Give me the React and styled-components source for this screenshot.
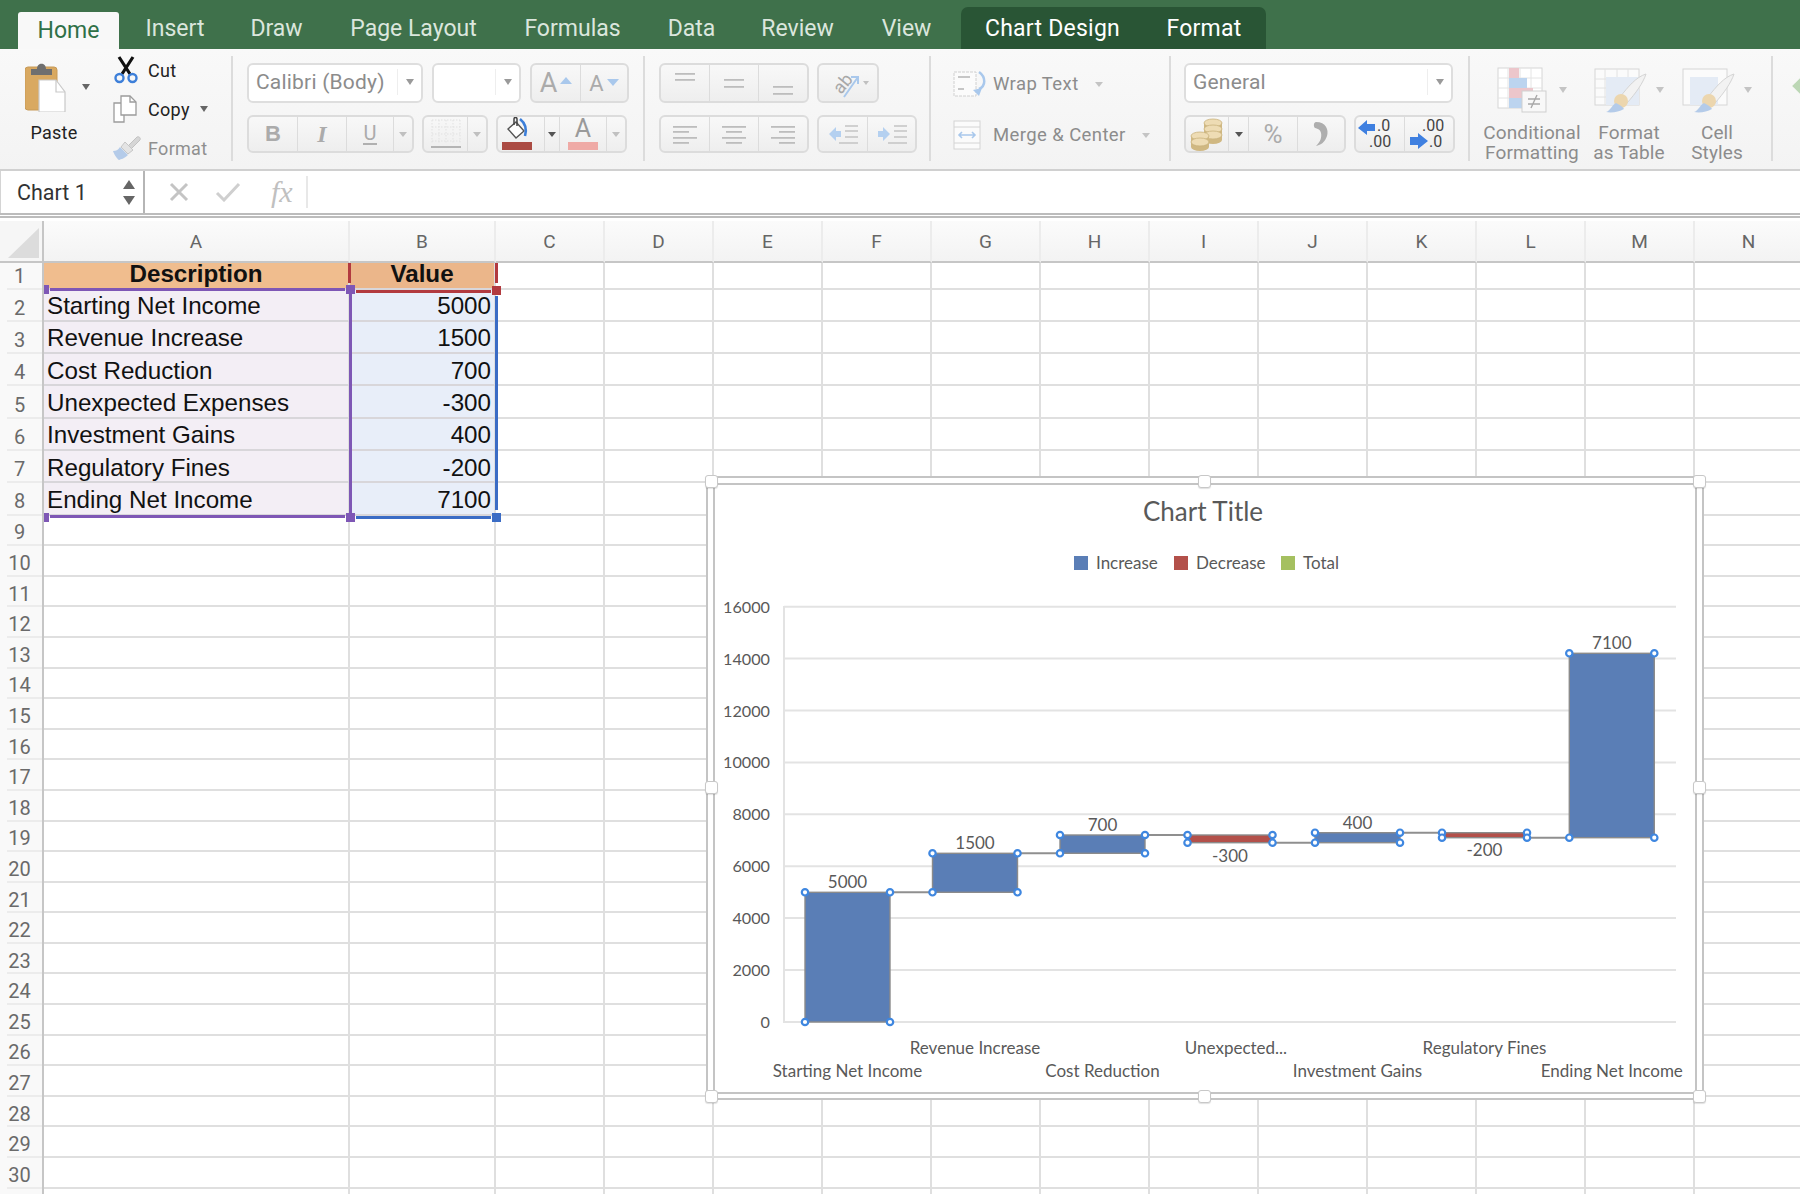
import React from "react";
import styled, { createGlobalStyle } from "styled-components";

const GlobalStyle = createGlobalStyle`
  html, body { margin: 0; padding: 0; background: #fff; }
  * { box-sizing: border-box; }
`;

const UI = `Roboto, "Liberation Sans", sans-serif`;
const CHART = `Lato, "Open Sans", sans-serif`;

const Page = styled.div`
  width: 1800px;
  height: 1194px;
  overflow: hidden;
  position: relative;
  font-family: ${UI};
  background: #fff;
`;

/* tabs */
const TabBar = styled.div`
  height: 49px;
  background: #3f714b;
  display: flex;
  align-items: flex-end;
  padding-left: 18px;
`;
const Tab = styled.div`
  width: ${(p) => p.$w}px;
  height: ${(p) => (p.$active ? 37 : 42)}px;
  display: flex;
  align-items: center;
  justify-content: center;
  padding-top: ${(p) => (p.$active ? 0 : 1)}px;
  font-size: 23px;
  letter-spacing: ${(p) => (p.$light ? 0.25 : 0)}px;
  color: ${(p) => (p.$active ? "#2f7047" : p.$light ? "#fff" : "#dbe6dd")};
  background: ${(p) => (p.$active ? "#f8f8f8" : "transparent")};
  border-radius: ${(p) => (p.$active ? "3px 3px 0 0" : "0")};
`;
const ContextTabs = styled.div`
  display: flex;
  padding-right: 2px;
  background: #295535;
  border-radius: 7px 7px 0 0;
`;

/* ribbon */
const Ribbon = styled.div`
  height: 122px;
  display: flex;
  padding-top: 7px;
  background: linear-gradient(#f9f9f9, #f3f3f3);
  border-bottom: 2px solid #d0d0d0;
  overflow: hidden;
`;
const Group = styled.div`
  width: ${(p) => p.$w}px;
  height: 105px;
  flex: none;
  display: flex;
  padding-left: ${(p) => p.$pad || 0}px;
  border-right: ${(p) => (p.$last ? "none" : "2px solid #dcdcdc")};
`;
const Stack = styled.div`
  display: flex;
  flex-direction: column;
  gap: 12px;
  padding-top: 7px;
`;
const ControlRow = styled.div`
  display: flex;
  height: ${(p) => p.$h}px;
  gap: ${(p) => p.$gap || 8}px;
`;
const Select = styled.div`
  width: ${(p) => p.$w}px;
  height: 100%;
  display: flex;
  align-items: center;
  background: #fff;
  border: 2px solid #dedede;
  border-radius: 6px;
  padding: 0 0 2px 7px;
  font-size: 21px;
  color: #8c8c8c;
`;
const SelectText = styled.div`
  flex: 1;
  letter-spacing: 0.2px;
`;
const SelectArrow = styled.div`
  width: 24px;
  height: 26px;
  display: flex;
  align-items: center;
  justify-content: center;
  border-left: 1px solid #eee;
`;
const Caret = styled.span`
  display: inline-block;
  flex: none;
  width: 0;
  height: 0;
  border-left: ${(p) => p.$s || 4.5}px solid transparent;
  border-right: ${(p) => p.$s || 4.5}px solid transparent;
  border-top: ${(p) => (p.$s || 4.5) * 1.4}px solid ${(p) => p.$c || "#9a9a9a"};
`;
const BtnGroup = styled.div`
  display: flex;
  height: 100%;
  border: 2px solid #dcdcdc;
  border-radius: 6px;
  background: linear-gradient(#f8f8f8, #eeeeee);
  overflow: hidden;
`;
const Seg = styled.div`
  width: ${(p) => p.$w}px;
  height: 100%;
  flex: none;
  display: flex;
  align-items: center;
  justify-content: center;
  border-right: ${(p) => (p.$end ? "none" : "1px solid #dcdcdc")};
  color: #ababab;
  font-size: ${(p) => p.$size || 22}px;
`;
const BoldMark = styled.span`
  font-family: "Liberation Sans", sans-serif;
  font-weight: 700;
`;
const ItalicMark = styled.span`
  font-family: "Liberation Serif", serif;
  font-style: italic;
  font-weight: 700;
  font-size: 24px;
`;
const UnderMark = styled.span`
  font-family: Roboto, sans-serif;
  font-size: 20px;
  border-bottom: 2px solid #b0b0b0;
  line-height: 20px;
  padding: 0 1px;
`;
const GrowMark = styled.span`
  font-size: ${(p) => p.$size}px;
  color: #ababab;
  margin-right: 3px;
`;
const Tri = styled.span`
  display: inline-block;
  width: 0;
  height: 0;
  border-left: 6px solid transparent;
  border-right: 6px solid transparent;
  ${(p) => (p.$up ? "border-bottom: 7px solid #a9c8ec; margin-top: -6px;" : "border-top: 7px solid #a9c8ec; margin-top: -2px;")}
`;
const SwatchLetter = styled.div`
  display: flex;
  flex-direction: column;
  align-items: center;
  color: #9a9a9a;
  font-size: 25px;
  line-height: 22px;
`;
const ColorBar = styled.div`
  width: 30px;
  height: 8px;
  margin-top: 2px;
  background: ${(p) => p.$c};
`;

const PasteCol = styled.div`
  width: 108px;
  padding-top: 6px;
`;
const PasteTop = styled.div`
  display: flex;
  align-items: center;
  gap: 16px;
  margin-left: 25px;
  height: 50px;
`;
const ClipLabel = styled.div`
  margin-top: 10px;
  text-align: center;
  font-size: 18px;
  line-height: 22px;
  color: #222;
  letter-spacing: 0.2px;
`;
const ClipList = styled.div`
  display: flex;
  flex-direction: column;
  gap: 15px;
  margin-left: 5px;
  padding-top: 2px;
`;
const ClipRow = styled.div`
  height: 24px;
  display: flex;
  align-items: center;
  font-size: 18px;
  color: ${(p) => (p.$faded ? "#8f8f8f" : "#222")};
  letter-spacing: 0.3px;
`;
const ClipIcon = styled.div`
  width: 35px;
  flex: none;
`;
const MergeRow = styled.div`
  height: ${(p) => p.$h}px;
  display: flex;
  align-items: center;
  gap: 6px;
  padding-top: 2px;
  font-size: 18.5px;
  letter-spacing: 0.4px;
  color: #8c8c8c;
`;
const MergeCol = styled(Stack)`
  padding-left: 22px;
`;
const MergeCaret = styled.span`
  margin-left: 10px;
  display: flex;
`;
const StyleCol = styled.div`
  width: ${(p) => p.$w}px;
  padding-top: 11px;
  flex: none;
`;
const StyleIcon = styled.div`
  height: 46px;
  display: flex;
  align-items: center;
  justify-content: center;
  gap: 8px;
`;
const StyleText = styled.div`
  margin-top: 10px;
  text-align: center;
  font-size: 19px;
  line-height: 20px;
  letter-spacing: 0.1px;
  color: #8c8c8c;
  white-space: nowrap;
  display: flex;
  flex-direction: column;
  align-items: center;
`;
const Diamond = styled.div`
  width: 26px;
  height: 26px;
  margin: 17px 0 0 20px;
  flex: none;
  background: #bcd7b5;
  transform: rotate(45deg) scale(0.75);
`;

/* formula bar */
const FormulaBar = styled.div`
  height: 44px;
  display: flex;
  align-items: center;
  border-bottom: 2px solid #bcbcbc;
`;
const NameBox = styled.div`
  width: 145px;
  height: 100%;
  display: flex;
  align-items: center;
  justify-content: space-between;
  padding: 0 8px 0 16px;
  border-right: 2px solid #b5b5b5;
  border-left: 1px solid #d4d4d4;
  font-size: 21.5px;
  color: #333;
`;
const Stepper = styled.div`
  display: flex;
  flex-direction: column;
  gap: 7px;
`;
const StepTri = styled.span`
  width: 0;
  height: 0;
  border-left: 6px solid transparent;
  border-right: 6px solid transparent;
  ${(p) => (p.$up ? "border-bottom: 9px solid #666;" : "border-top: 9px solid #666;")}
`;
const FormulaIcons = styled.div`
  width: 163px;
  height: 32px;
  display: flex;
  align-items: center;
  gap: 26px;
  padding-left: 24px;
  border-right: 2px solid #e8e8e8;
`;
const FxMark = styled.span`
  margin-left: 4px;
  font-family: "Liberation Serif", serif;
  font-style: italic;
  font-size: 30px;
  color: #c0c0c0;
`;

/* sheet */
const Sheet = styled.div`
  position: relative;
  padding-top: 3px;
`;
const SheetTopLine = styled.div`
  height: 3px;
  border-bottom: 2px solid #bcbcbc;
`;
const Row = styled.div`
  display: grid;
  grid-template-columns: 44px 306px 146px repeat(12, 109px);
  grid-template-rows: minmax(0, 1fr);
  height: ${(p) => p.$h}px;
`;
const ColHead = styled.div`
  display: flex;
  align-items: center;
  justify-content: center;
  font-size: 19px;
  color: #666;
  background: linear-gradient(#fbfbfb, #f3f3f3);
  border-right: 2px solid #ececec;
  border-bottom: 2px solid #c6c6c6;
`;
const Corner = styled.div`
  background: #f6f6f6;
  border-right: 2px solid #c6c6c6;
  border-bottom: 2px solid #c6c6c6;
  display: flex;
  align-items: flex-end;
  justify-content: flex-end;
  padding: 0 3px 3px 0;
`;
const CornerTri = styled.div`
  width: 0;
  height: 0;
  border-left: 31px solid transparent;
  border-bottom: 30px solid #dcdcdc;
`;
const RowHead = styled.div`
  position: relative;
  display: flex;
  align-items: center;
  justify-content: center;
  padding: ${(p) => p.$top}px 3px ${(p) => p.$bottom || 0}px 0;
  font-size: 20px;
  line-height: 20px;
  color: #6a6a6a;
  background: #f9f9f9;
  border-right: 2px solid #c6c6c6;
  &::after {
    content: "";
    position: absolute;
    left: 7px;
    right: 0;
    bottom: 0;
    height: 2px;
    background: #ececec;
  }
`;
const Cell = styled.div`
  display: flex;
  align-items: center;
  justify-content: ${(p) => (p.$align === "right" ? "flex-end" : p.$align === "center" ? "center" : "flex-start")};
  padding: ${(p) => (p.$data ? 3 : 0)}px 3px ${(p) => (p.$bold ? 2 : 0)}px 3px;
  background: ${(p) => p.$bg || "#fff"};
  border-right: 2px solid #dfdfdf;
  border-bottom: 2px solid ${(p) => (p.$bg ? "#d8d6da" : "#dfdfdf")};
  font-family: "Liberation Sans", Arial, sans-serif;
  font-size: 24.2px;
  line-height: 24px;
  font-weight: ${(p) => (p.$bold ? 700 : 400)};
  color: #111;
  white-space: nowrap;
`;

/* coloured range marks over the sheet */
const RangeEdge = styled.div`
  position: absolute;
  left: ${(p) => p.$x}px;
  top: ${(p) => p.$y}px;
  width: ${(p) => p.$w}px;
  height: ${(p) => p.$h}px;
  background: ${(p) => p.$c};
`;
const RangeHandle = styled.div`
  position: absolute;
  left: ${(p) => p.$x - (p.$s || 9) / 2}px;
  top: ${(p) => p.$y - 4.5}px;
  width: ${(p) => p.$s || 9}px;
  height: 9px;
  background: ${(p) => p.$c};
`;

/* chart object */
const ChartFrame = styled.div`
  position: absolute;
  left: 706px;
  top: 258px;
  width: 998px;
  height: 624px;
  padding: 5px 5px 4px;
  background: #fff;
  border: 2px solid #c4c4c4;
`;
const ChartBody = styled.div`
  width: 100%;
  height: 100%;
  border: 2px solid #c4c4c4;
  background: #fff;
`;
const ChartSvg = styled.svg`
  display: block;
  width: 980px;
  height: 607px;
  font-family: ${CHART};
`;
const ChartHandle = styled.div`
  position: absolute;
  left: ${(p) => p.$x - 6.5}px;
  top: ${(p) => p.$y - 6.5}px;
  width: 13px;
  height: 13px;
  background: #fff;
  border: 1.5px solid #c8c8c8;
  border-radius: 3px;
  box-shadow: 0 1px 1px rgba(0, 0, 0, 0.12);
`;

/* icons */
const PasteIcon = () => (
  <svg width="41" height="50" viewBox="0 0 41 50">
    <rect x="0" y="5" width="32" height="43" rx="3" fill="#d9a961" stroke="#c79a58" />
    <path d="M6 13 V7 H12 C12 0 21 0 21 7 H27 V13 Z" fill="#6f6f6f" />
    <path d="M14 18 H31 L40 30 V50 H14 Z" fill="#fff" stroke="#c9c9c9" strokeWidth="1.2" />
    <path d="M31 18 V30 H40" fill="none" stroke="#c9c9c9" strokeWidth="1.2" />
  </svg>
);
const ScissorsIcon = () => (
  <svg width="26" height="28" viewBox="0 0 26 28" style={{ display: "block" }}>
    <path d="M6 1 L17 18 M20 1 L9 18" stroke="#111" strokeWidth="3.2" />
    <circle cx="6.5" cy="22" r="4" fill="none" stroke="#3d7fd9" strokeWidth="2.4" />
    <circle cx="19.5" cy="22" r="4" fill="none" stroke="#3d7fd9" strokeWidth="2.4" />
  </svg>
);
const CopyIcon = () => (
  <svg width="24" height="28" viewBox="0 0 24 28" style={{ display: "block" }}>
    <path d="M1 8 H11 V27 H1 Z" fill="#fff" stroke="#9c9c9c" strokeWidth="1.3" />
    <path d="M8 1 H17 L23 7 V20 H8 Z" fill="#fff" stroke="#9c9c9c" strokeWidth="1.3" />
    <path d="M17 1 V7 H23" fill="none" stroke="#9c9c9c" strokeWidth="1.3" />
  </svg>
);
const PainterIcon = () => (
  <svg width="28" height="24" viewBox="0 0 28 24" style={{ display: "block" }}>
    <path d="M15 10 L24 1 C26 0 28 2 27 4 L18 13 Z" fill="#d6d6d6" stroke="#c2c2c2" />
    <path d="M12 6 L20 14 L15 18 L8 11 Z" fill="#e4e4e4" stroke="#c6c6c6" />
    <path d="M7 11 L15 19 C11 23 8 23 6 24 C4 23 1 18 0 15 C3 15 5 14 7 11 Z" fill="#b4cbe9" />
  </svg>
);
const BorderIcon = () => (
  <svg width="30" height="32" viewBox="0 0 30 32">
    <path d="M1 2 H29 M1 9 H29 M1 16 H29 M1 23 H29 M1 2 V26 M8 2 V26 M15 2 V26 M22 2 V26 M29 2 V26" stroke="#e1e1e1" strokeWidth="1" strokeDasharray="1.5 1.5" />
    <path d="M0 29 H30" stroke="#b4b4b4" strokeWidth="2" />
  </svg>
);
const FillIcon = () => (
  <svg width="34" height="36" viewBox="0 0 34 36" style={{ marginRight: 8 }}>
    <path d="M8 13 L16 6 L24 15 L16 22 Z" fill="#fff" stroke="#555" strokeWidth="1.4" />
    <path d="M14 9 V3 C14 1 17 1 17 3 V10" fill="none" stroke="#444" strokeWidth="1.5" />
    <path d="M20 3 C25 7 27 13 25 20" fill="none" stroke="#3d7fd9" strokeWidth="2.6" />
    <rect x="2" y="26" width="30" height="8" fill="#ab4b43" />
  </svg>
);
const LinesIcon = ({ rows }) => (
  <svg width="28" height="34" viewBox="0 0 28 34">
    {rows.map(([x, y, w], i) => (
      <rect key={i} x={x} y={y} width={w} height="1.8" fill="#bdbdbd" />
    ))}
  </svg>
);
const OrientIcon = () => (
  <svg width="36" height="36" viewBox="0 0 36 36">
    <text x="0" y="0" transform="translate(14 30) rotate(-50)" fontFamily="Roboto, sans-serif" fontSize="18" fill="#a8a8a8">ab</text>
    <path d="M17 32 L31 12 M24 12 H31 V19" fill="none" stroke="#a9c8ec" strokeWidth="2" />
  </svg>
);
const IndentIcon = ({ right }) => (
  <svg width="36" height="26" viewBox="0 0 36 26">
    <path d={right ? "M4 10 H9 V6 L16 13 L9 20 V16 H4 Z" : "M16 10 H11 V6 L4 13 L11 20 V16 H16 Z"} fill="#b4d0f0" />
    <path d="M20 5 H33 M20 10 H33 M20 16 H33 M14 22 H33" stroke="#c4c4c4" strokeWidth="1.6" />
  </svg>
);
const WrapIcon = () => (
  <svg width="34" height="30" viewBox="0 0 34 30">
    <rect x="1" y="3" width="22" height="24" fill="#fbfbfb" stroke="#d0d0d0" strokeDasharray="3 1" />
    <path d="M5 8 H17 M5 20 H11" stroke="#b5b5b5" strokeWidth="1.5" />
    <path d="M26 3 C33 8 33 17 26 20" fill="none" stroke="#a9c8ec" strokeWidth="2.5" />
    <path d="M29 19 L20 21 L26 27 Z" fill="#a9c8ec" />
  </svg>
);
const MergeIcon = () => (
  <svg width="28" height="30" viewBox="0 0 28 30" style={{ marginRight: 6 }}>
    <rect x="1" y="1" width="26" height="28" fill="#fbfbfb" stroke="#d4d4d4" />
    <path d="M1 7 H27 M1 23 H27" stroke="#d4d4d4" />
    <path d="M6 15 H22 M9 12 L6 15 L9 18 M19 12 L22 15 L19 18" fill="none" stroke="#a9c8ec" strokeWidth="1.6" />
  </svg>
);
const CoinsIcon = () => (
  <svg width="34" height="34" viewBox="0 0 34 34">
    {[[23, 6], [23, 12], [23, 18], [10, 19], [10, 25]].map(([x, y], i) => (
      <g key={i}>
        <path d={`M${x - 9} ${y} V${y + 5} A9 4 0 0 0 ${x + 9} ${y + 5} V${y} Z`} fill="#d0b882" />
        <ellipse cx={x} cy={y} rx="9" ry="4" fill="#eedcb4" stroke="#c9b27c" strokeWidth="0.8" />
      </g>
    ))}
  </svg>
);
const CommaIcon = () => (
  <svg width="16" height="26" viewBox="0 0 16 26">
    <path d="M3 1 C13 1 16 9 14 15 C12 21 8 24 3 25 C7 21 9 17 8 12 C7 8 5 8 2 7 C0 5 1 1 3 1 Z" fill="#aeaeae" />
  </svg>
);
const DecimalIcon = ({ more }) => (
  <svg width="46" height="34" viewBox="0 0 46 34" fontFamily="Roboto, sans-serif" fontSize="16" fill="#444">
    {more ? (
      <>
        <path d="M1 11 L10 3 V7 H18 V14 H10 V18 Z" fill="#3f80e0" />
        <text x="20" y="14">.0</text>
        <text x="12" y="30">.00</text>
      </>
    ) : (
      <>
        <text x="16" y="14">.00</text>
        <path d="M4 20 H12 V16 L22 24 L12 32 V28 H4 Z" fill="#3f80e0" />
        <text x="23" y="30">.0</text>
      </>
    )}
  </svg>
);
const ConditionalIcon = () => (
  <svg width="50" height="46" viewBox="0 0 50 46" style={{ marginRight: 4 }}>
    <rect x="1" y="1" width="44" height="40" fill="#fff" stroke="#d6d6d6" />
    <path d="M1 11 H45 M1 21 H45 M1 31 H45 M11 1 V41 M23 1 V41 M34 1 V41" stroke="#e4e4e4" />
    <rect x="12" y="1" width="10" height="10" fill="#ecc6cb" />
    <rect x="12" y="11" width="18" height="10" fill="#bcd4ef" />
    <rect x="12" y="21" width="24" height="10" fill="#ecc6cb" />
    <rect x="12" y="31" width="14" height="10" fill="#bcd4ef" />
    <rect x="25" y="24" width="24" height="21" fill="#f8f8f8" stroke="#cfcfcf" />
    <path d="M31 32 H43 M31 37 H43 M40 28 L34 41" stroke="#a8a8a8" strokeWidth="1.4" />
  </svg>
);
const BrushIcon = ({ dense }) => (
  <svg width="54" height="46" viewBox="0 0 54 46">
    <rect x="1" y="2" width="44" height="36" fill="#fbfbfb" stroke="#d6d6d6" />
    {dense && <path d="M1 12 H45 M1 21 H45 M1 30 H45 M11 2 V38 M23 2 V38 M34 2 V38" stroke="#e2e2e2" />}
    <rect x={dense ? 12 : 8} y="10" width={dense ? 33 : 28} height="28" fill="#e4ebf5" />
    <path d="M26 30 C34 20 42 10 52 7 C49 16 42 26 33 36 Z" fill="#f2f2f2" stroke="#d4d4d4" />
    <ellipse cx="27" cy="34" rx="7" ry="7" fill="#ecd6ae" />
    <path d="M12 45 C16 44 18 38 22 36 C26 38 29 40 30 42 C25 45 18 46 12 45 Z" fill="#b4cbe9" />
  </svg>
);
const GhostX = () => (
  <svg width="20" height="20" viewBox="0 0 20 20">
    <path d="M2 2 L18 18 M18 2 L2 18" stroke="#c4c4c4" strokeWidth="3" />
  </svg>
);
const GhostCheck = () => (
  <svg width="26" height="20" viewBox="0 0 26 20">
    <path d="M2 11 L9 18 L24 2" fill="none" stroke="#cfcfcf" strokeWidth="3" />
  </svg>
);

const tabs = [
  ["Insert", 112],
  ["Draw", 91],
  ["Page Layout", 183],
  ["Formulas", 135],
  ["Data", 103],
  ["Review", 109],
  ["View", 109],
];

const columns = ["A", "B", "C", "D", "E", "F", "G", "H", "I", "J", "K", "L", "M", "N"];

const tableRows = [
  ["Starting Net Income", "5000"],
  ["Revenue Increase", "1500"],
  ["Cost Reduction", "700"],
  ["Unexpected Expenses", "-300"],
  ["Investment Gains", "400"],
  ["Regulatory Fines", "-200"],
  ["Ending Net Income", "7100"],
];

const rowHeight = (n) => (n === 1 ? 26.5 : n <= 8 ? 32.3 : 30.6);

const axisTicks = [
  [16000, 606.7],
  [14000, 658.6],
  [12000, 710.5],
  [10000, 762.4],
  [8000, 814.3],
  [6000, 866.2],
  [4000, 918.1],
  [2000, 970],
  [0, 1022],
];

const BLUE = "#5a7eb6";
const RED = "#b3504a";

const bars = [
  { x: 805, top: 892.3, bottom: 1022, fill: BLUE, label: "5000", labelY: 882, cat: "Starting Net Income", catY: 1071 },
  { x: 932.5, top: 853.3, bottom: 892.3, fill: BLUE, label: "1500", labelY: 843, cat: "Revenue Increase", catY: 1048 },
  { x: 1060, top: 835, bottom: 853.3, fill: BLUE, label: "700", labelY: 825, cat: "Cost Reduction", catY: 1071 },
  { x: 1187.5, top: 835, bottom: 842.7, fill: RED, label: "-300", labelY: 856, cat: "Unexpected...", catY: 1048, catX: 1236 },
  { x: 1315, top: 832.7, bottom: 842.7, fill: BLUE, label: "400", labelY: 823, cat: "Investment Gains", catY: 1071 },
  { x: 1442, top: 832.7, bottom: 837.7, fill: RED, label: "-200", labelY: 850, cat: "Regulatory Fines", catY: 1048 },
  { x: 1569.3, top: 653.3, bottom: 837.7, fill: BLUE, label: "7100", labelY: 643, cat: "Ending Net Income", catY: 1071 },
];
const BAR_W = 85;

const connectors = [
  [890, 932, 892.3],
  [1017, 1060, 853.3],
  [1145, 1187, 835],
  [1272, 1315, 842.7],
  [1400, 1442, 832.7],
  [1527, 1569, 837.7],
];

const legend = [
  ["Increase", 1074, BLUE],
  ["Decrease", 1174, RED],
  ["Total", 1281, "#a5c060"],
];

const Waterfall = () => (
  <ChartSvg viewBox="715 485 980 607">
    <text x="1203" y="521" textAnchor="middle" fontSize="26" fill="#595959">Chart Title</text>
    {legend.map(([name, x, c]) => (
      <g key={name}>
        <rect x={x} y="556" width="14" height="14" fill={c} />
        <text x={x + 22} y="568.5" fontSize="17" fill="#595959">{name}</text>
      </g>
    ))}
    {axisTicks.map(([v, y]) => (
      <g key={v}>
        <line x1="784" x2="1676" y1={y} y2={y} stroke="#e3e3e3" strokeWidth="2" />
        <text x="770" y={y + 6} textAnchor="end" fontSize="16.2" fill="#595959">{v}</text>
      </g>
    ))}
    <line x1="784" x2="784" y1="606" y2="1023" stroke="#e3e3e3" strokeWidth="2" />
    {connectors.map(([a, b, y]) => (
      <line key={a} x1={a} x2={b} y1={y} y2={y} stroke="#8f8f8f" strokeWidth="2" />
    ))}
    {bars.map((b) => (
      <g key={b.cat}>
        <rect x={b.x} y={b.top} width={BAR_W} height={b.bottom - b.top} fill={b.fill} stroke="#8b8b8b" strokeWidth="1.4" />
        <text x={b.x + BAR_W / 2} y={b.labelY + 6} textAnchor="middle" fontSize="17" fill="#595959">{b.label}</text>
        <text x={b.catX || b.x + BAR_W / 2} y={b.catY + 6} textAnchor="middle" fontSize="17" fill="#595959">{b.cat}</text>
        {[b.x, b.x + BAR_W].map((cx) =>
          [b.top, b.bottom].map((cy) => (
            <circle key={`${cx}-${cy}`} cx={cx} cy={cy} r="3.2" fill="#fff" stroke="#3f87e0" strokeWidth="2.2" />
          ))
        )}
      </g>
    ))}
  </ChartSvg>
);

const chartHandles = [
  [711, 263],
  [1204, 263],
  [1699, 263],
  [711, 569],
  [1699, 569],
  [711, 878],
  [1204, 878],
  [1699, 878],
];

export default function App() {
  const rows = Array.from({ length: 31 }, (_, i) => i + 1);
  return (
    <Page>
      <GlobalStyle />
      <TabBar>
        <Tab $active $w={101}>Home</Tab>
        {tabs.map(([name, w]) => (
          <Tab key={name} $w={w}>{name}</Tab>
        ))}
        <ContextTabs>
          <Tab $light $w={183}>Chart Design</Tab>
          <Tab $light $w={120}>Format</Tab>
        </ContextTabs>
      </TabBar>

      <Ribbon>
        <Group $w={233}>
          <PasteCol>
            <PasteTop>
              <PasteIcon />
              <Caret $c="#666" />
            </PasteTop>
            <ClipLabel>Paste</ClipLabel>
          </PasteCol>
          <ClipList>
            <ClipRow><ClipIcon><ScissorsIcon /></ClipIcon>Cut</ClipRow>
            <ClipRow>
              <ClipIcon><CopyIcon /></ClipIcon>Copy
              <MergeCaret><Caret $c="#666" /></MergeCaret>
            </ClipRow>
            <ClipRow $faded><ClipIcon><PainterIcon /></ClipIcon>Format</ClipRow>
          </ClipList>
        </Group>

        <Group $w={412} $pad={14}>
          <Stack>
            <ControlRow $h={40} $gap={9}>
              <Select $w={176}>
                <SelectText>Calibri (Body)</SelectText>
                <SelectArrow><Caret /></SelectArrow>
              </Select>
              <Select $w={89}>
                <SelectText />
                <SelectArrow><Caret /></SelectArrow>
              </Select>
              <BtnGroup>
                <Seg $w={49}><GrowMark $size={27}>A</GrowMark><Tri $up /></Seg>
                <Seg $w={46} $end><GrowMark $size={22}>A</GrowMark><Tri /></Seg>
              </BtnGroup>
            </ControlRow>
            <ControlRow $h={38} $gap={8}>
              <BtnGroup>
                <Seg $w={49}><BoldMark>B</BoldMark></Seg>
                <Seg $w={49}><ItalicMark>I</ItalicMark></Seg>
                <Seg $w={47}><UnderMark>U</UnderMark></Seg>
                <Seg $w={18} $end><Caret $s={4} $c="#c0c0c0" /></Seg>
              </BtnGroup>
              <BtnGroup>
                <Seg $w={44}><BorderIcon /></Seg>
                <Seg $w={18} $end><Caret $s={4} $c="#c0c0c0" /></Seg>
              </BtnGroup>
              <BtnGroup>
                <Seg $w={47}><FillIcon /></Seg>
                <Seg $w={15}><Caret $s={4} $c="#555" /></Seg>
                <Seg $w={47}>
                  <SwatchLetter>A<ColorBar $c="#efaaa6" /></SwatchLetter>
                </Seg>
                <Seg $w={18} $end><Caret $s={4} $c="#c0c0c0" /></Seg>
              </BtnGroup>
            </ControlRow>
          </Stack>
        </Group>

        <Group $w={286} $pad={14}>
          <Stack>
            <ControlRow $h={40}>
              <BtnGroup>
                <Seg $w={49}><LinesIcon rows={[[4, 7, 20], [4, 13, 20]]} /></Seg>
                <Seg $w={49}><LinesIcon rows={[[4, 13, 20], [4, 20, 20]]} /></Seg>
                <Seg $w={48} $end><LinesIcon rows={[[4, 20, 20], [4, 27, 20]]} /></Seg>
              </BtnGroup>
              <BtnGroup>
                <Seg $w={58} $end>
                  <OrientIcon />
                  <Caret $s={3.5} $c="#c0c0c0" />
                </Seg>
              </BtnGroup>
            </ControlRow>
            <ControlRow $h={38}>
              <BtnGroup>
                <Seg $w={49}><LinesIcon rows={[[2, 9, 24], [2, 14, 16], [2, 20, 24], [2, 25, 16]]} /></Seg>
                <Seg $w={49}><LinesIcon rows={[[2, 9, 24], [6, 14, 16], [2, 20, 24], [6, 25, 16]]} /></Seg>
                <Seg $w={48} $end><LinesIcon rows={[[2, 9, 24], [10, 14, 16], [2, 20, 24], [10, 25, 16]]} /></Seg>
              </BtnGroup>
              <BtnGroup>
                <Seg $w={49}><IndentIcon /></Seg>
                <Seg $w={47} $end><IndentIcon right /></Seg>
              </BtnGroup>
            </ControlRow>
          </Stack>
        </Group>

        <Group $w={240}>
          <MergeCol>
            <MergeRow $h={40}>
              <WrapIcon />Wrap Text
              <MergeCaret><Caret $s={4} $c="#c4c4c4" /></MergeCaret>
            </MergeRow>
            <MergeRow $h={38}>
              <MergeIcon />Merge &amp; Center
              <MergeCaret><Caret $s={4} $c="#c4c4c4" /></MergeCaret>
            </MergeRow>
          </MergeCol>
        </Group>

        <Group $w={299} $pad={13}>
          <Stack>
            <ControlRow $h={40}>
              <Select $w={269}>
                <SelectText>General</SelectText>
                <SelectArrow><Caret /></SelectArrow>
              </Select>
            </ControlRow>
            <ControlRow $h={38}>
              <BtnGroup>
                <Seg $w={43}><CoinsIcon /></Seg>
                <Seg $w={20}><Caret $s={4} $c="#555" /></Seg>
                <Seg $w={49} $size={26}>%</Seg>
                <Seg $w={46} $end><CommaIcon /></Seg>
              </BtnGroup>
              <BtnGroup>
                <Seg $w={49}><DecimalIcon more /></Seg>
                <Seg $w={48} $end><DecimalIcon /></Seg>
              </BtnGroup>
            </ControlRow>
          </Stack>
        </Group>

        <Group $w={303}>
          <StyleCol $w={124}>
            <StyleIcon><ConditionalIcon /><Caret $c="#c4c4c4" /></StyleIcon>
            <StyleText><span>Conditional</span><span>Formatting</span></StyleText>
          </StyleCol>
          <StyleCol $w={70}>
            <StyleIcon><BrushIcon dense /><Caret $c="#c4c4c4" /></StyleIcon>
            <StyleText><span>Format</span><span>as Table</span></StyleText>
          </StyleCol>
          <StyleCol $w={106}>
            <StyleIcon><BrushIcon /><Caret $c="#c4c4c4" /></StyleIcon>
            <StyleText><span>Cell</span><span>Styles</span></StyleText>
          </StyleCol>
        </Group>

        <Group $w={27} $last>
          <Diamond />
        </Group>
      </Ribbon>

      <FormulaBar>
        <NameBox>
          Chart 1
          <Stepper><StepTri $up /><StepTri /></Stepper>
        </NameBox>
        <FormulaIcons>
          <GhostX />
          <GhostCheck />
          <FxMark>fx</FxMark>
        </FormulaIcons>
      </FormulaBar>
      <SheetTopLine />

      <Sheet>
        <Row $h={42}>
          <Corner><CornerTri /></Corner>
          {columns.map((c) => (
            <ColHead key={c}>{c}</ColHead>
          ))}
        </Row>
        {rows.map((n) => {
          const data = n >= 2 && n <= 8 ? tableRows[n - 2] : null;
          return (
            <Row key={n} $h={rowHeight(n)}>
              <RowHead $top={data ? 4 : n === 1 ? 0 : 3} $bottom={n === 1 ? 1 : 0}>{n <= 30 ? n : ""}</RowHead>
              {n === 1 ? (
                <>
                  <Cell $bg="#f0bd8e" $bold $align="center">Description</Cell>
                  <Cell $bg="#ebb68a" $bold $align="center">Value</Cell>
                </>
              ) : data ? (
                <>
                  <Cell $bg="#f3eef5" $data>{data[0]}</Cell>
                  <Cell $bg="#e8eef9" $data $align="right">{data[1]}</Cell>
                </>
              ) : (
                <>
                  <Cell />
                  <Cell />
                </>
              )}
              {columns.slice(2).map((c) => (
                <Cell key={c} />
              ))}
            </Row>
          );
        })}

        <RangeEdge $x={50} $y={70} $w={295} $h={3} $c="#7e57b5" />
        <RangeEdge $x={349} $y={74} $w={3} $h={225} $c="#7e57b5" />
        <RangeEdge $x={50} $y={297} $w={295} $h={3} $c="#7e57b5" />
        <RangeHandle $x={46} $y={71.5} $s={5} $c="#7e57b5" />
        <RangeHandle $x={350} $y={71.5} $c="#7e57b5" />
        <RangeHandle $x={46} $y={299} $s={5} $c="#7e57b5" />
        <RangeHandle $x={350} $y={299} $c="#7e57b5" />

        <RangeEdge $x={348} $y={45} $w={3} $h={20} $c="#b23a3f" />
        <RangeEdge $x={495} $y={45} $w={3} $h={20} $c="#b23a3f" />
        <RangeEdge $x={356} $y={71.5} $w={135} $h={3} $c="#b23a3f" />
        <RangeHandle $x={496} $y={72} $c="#b23a3f" />

        <RangeEdge $x={495} $y={78} $w={3} $h={214} $c="#3b6cc5" />
        <RangeEdge $x={356} $y={297.5} $w={135} $h={3} $c="#3b6cc5" />
        <RangeHandle $x={496} $y={299} $c="#3b6cc5" />

        <ChartFrame>
          <ChartBody>
            <Waterfall />
          </ChartBody>
        </ChartFrame>
        {chartHandles.map(([x, y]) => (
          <ChartHandle key={`${x}-${y}`} $x={x} $y={y} />
        ))}
      </Sheet>
    </Page>
  );
}
